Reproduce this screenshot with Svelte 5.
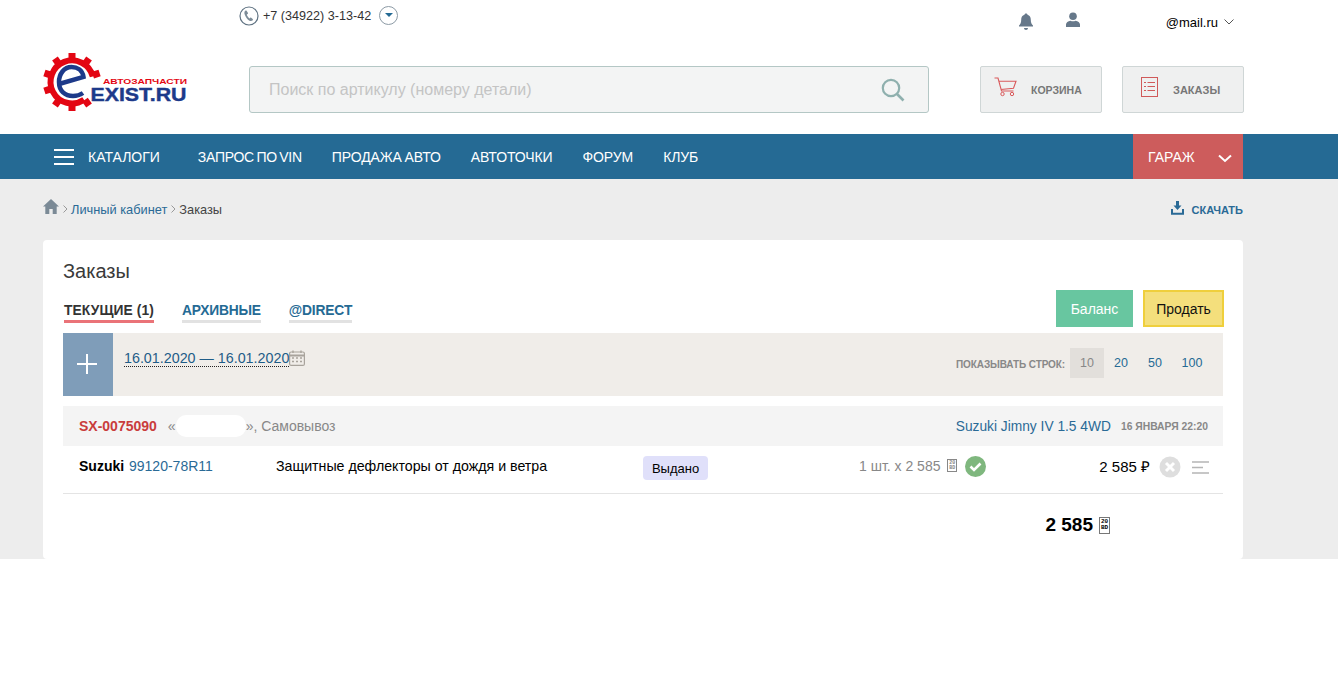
<script>
	const menu = ['ЗАПРОС ПО VIN', 'ПРОДАЖА АВТО', 'АВТОТОЧКИ', 'ФОРУМ', 'КЛУБ'];
	const tabs = [
		{ label: 'ТЕКУЩИЕ (1)', active: true },
		{ label: 'АРХИВНЫЕ' },
		{ label: '@DIRECT' }
	];
	const rows = [10, 20, 50, 100];
	// gear teeth of the logo, the right side is left open for the text
	const teeth = [0, 36, 72, 144, 180, 216, 252, 288, 324];
</script>

{#snippet tofu(kind)}
	<span class="tofu {kind}"><span>20</span><span>BD</span></span>
{/snippet}

<header class="top">
	<div class="top-line">
		<div class="phone">
			<svg width="20" height="20" viewBox="0 0 20 20">
				<circle cx="10" cy="10" r="9" fill="none" stroke="#5f7282" stroke-width="1.2" />
				<path d="M6.500 4.500c-1.200.8-1.400 2.400-.7 4.200.9 2.400 2.700 5 4.700 6 1.300.6 2.600.3 3.300-.5.300-.4.200-.8-.1-1.100l-1.500-1.300c-.3-.3-.8-.2-1.100.1l-.6.6c-1-.6-2.300-2.600-2.700-4l.8-.4c.4-.2.500-.6.400-1L7.600 4.800c-.2-.4-.7-.5-1.100-.3z" fill="#7d8c98" />
			</svg>
			<span>+7 (34922) 3-13-42</span>
			<span class="phone-more"><i></i></span>
		</div>
		<div class="account">
			<svg class="bell" width="16" height="18" viewBox="0 0 16 18">
				<path d="M8 .5c1 0 1.500.7 1.500 1.300 2.300.7 3.300 2.600 3.300 5 0 3 .8 4.300 2.200 5.700v.9H1v-.9C2.400 11.100 3.200 9.800 3.200 6.800c0-2.400 1-4.300 3.300-5C6.500 1.200 7 .5 8 .5z" fill="#66788a" />
				<path d="M6 15h4c0 1.200-.9 2-2 2s-2-.8-2-2z" fill="#66788a" />
			</svg>
			<svg class="user" width="16" height="16" viewBox="0 0 16 16">
				<circle cx="8" cy="4.300" r="3.800" fill="#66788a" />
				<path d="M1 15v-2.500c0-2 2-3.300 4.500-3.800 1.500.8 3.500.8 5 0 2.500.5 4.500 1.800 4.500 3.800V15z" fill="#66788a" />
			</svg>
			<span class="mail">@mail.ru</span>
			<svg width="10" height="6" viewBox="0 0 10 6"><path d="M.5.500 5 5 9.500.5" fill="none" stroke="#555" /></svg>
		</div>
	</div>

	<div class="main-line">
		<svg class="logo" width="146" height="58" viewBox="0 0 146 58">
			<path d="M49.800 23.400A21.500 21.500 0 1 0 41 46.800" fill="none" stroke="#e30613" stroke-width="6" />
			{#each teeth as a}
				<rect x="25.500" y="0" width="7" height="7" fill="#e30613" transform="rotate({a} 29 29)" />
			{/each}
			<path d="M16 31 40.500 24C39.500 17 34 14 28.500 14 21 14 16 21 16 29 16 38 22 43 30 43 34 43 37 42 40 40" fill="none" stroke="#1d3a8a" stroke-width="4.500" />
			<text class="logo-small" x="60" y="31" textLength="84" lengthAdjust="spacingAndGlyphs">АВТОЗАПЧАСТИ</text>
			<text class="logo-big" x="47.500" y="48" textLength="96" lengthAdjust="spacingAndGlyphs">EXIST.RU</text>
		</svg>
		<div class="search">
			<span>Поиск по артикулу (номеру детали)</span>
			<svg width="24" height="24" viewBox="0 0 24 24">
				<circle cx="10" cy="10" r="8.200" fill="none" stroke="#8fb0ae" stroke-width="2.200" />
				<path d="m16 16 6.500 6.500" stroke="#8fb0ae" stroke-width="2.600" />
			</svg>
		</div>
		<div class="action cart-action">
			<svg width="23" height="20" viewBox="0 0 23 20">
				<path d="M.5 1H4l3.500 13h12M5 4.300h17l-2.500 7L6.800 12.500" fill="none" stroke="#d9595b" stroke-width="1.100" />
				<circle cx="8.500" cy="17" r="1.700" fill="none" stroke="#d9595b" />
				<circle cx="18" cy="17" r="1.700" fill="none" stroke="#d9595b" />
			</svg>
			<span>КОРЗИНА</span>
		</div>
		<div class="action orders-action">
			<svg width="17" height="20" viewBox="0 0 17 20">
				<rect x=".5" y=".5" width="16" height="19" fill="none" stroke="#d05a5a" />
				<path d="M3 5.500h2M3 9.500h2M3 13.500h2M6.500 5.500H14M6.500 9.500H14M6.500 13.500H14" stroke="#d05a5a" />
			</svg>
			<span>ЗАКАЗЫ</span>
		</div>
	</div>
</header>

<nav>
	<div class="nav-inner">
		<div class="catalogs">
			<span class="burger"><i></i><i></i><i></i></span>
			<span>КАТАЛОГИ</span>
		</div>
		<div class="menu">
			{#each menu as item}
				<span>{item}</span>
			{/each}
		</div>
		<div class="garage">
			<span>ГАРАЖ</span>
			<svg width="14" height="9" viewBox="0 0 14 9"><path d="M1 1.500 7 7l6-5.500" fill="none" stroke="#fff" stroke-width="2" /></svg>
		</div>
	</div>
</nav>

<main>
	<div class="crumbs">
		<svg width="16" height="15" viewBox="0 0 16 15">
			<path d="M8 0 16 7.500h-2.300V15H9.700V10H6.300v5H2.300V7.500H0z" fill="#7b8a96" />
		</svg>
		<svg class="sep" width="5" height="8" viewBox="0 0 5 8"><path d="m.5.500 3.500 3.500-3.500 3.500" fill="none" stroke="#999" /></svg>
		<span class="link">Личный кабинет</span>
		<svg class="sep" width="5" height="8" viewBox="0 0 5 8"><path d="m.5.500 3.500 3.500-3.500 3.500" fill="none" stroke="#999" /></svg>
		<span>Заказы</span>
		<div class="download">
			<svg width="13" height="14" viewBox="0 0 13 14">
				<path d="M5 0h3v4.500h2.500L6.500 9 2.500 4.500H5z" fill="#2a6a96" />
				<path d="M1 8v4.800h11V8" fill="none" stroke="#2a6a96" stroke-width="2" />
			</svg>
			<span>СКАЧАТЬ</span>
		</div>
	</div>

	<section class="card">
		<h1>Заказы</h1>
		<div class="tabs-line">
			<div class="tabs">
				{#each tabs as tab}
					<span class="tab" class:active={tab.active}>{tab.label}</span>
				{/each}
			</div>
			<div class="buttons">
				<span class="balance">Баланс</span>
				<span class="sell">Продать</span>
			</div>
		</div>

		<div class="filter">
			<span class="plus"><i></i><i></i></span>
			<span class="dates">16.01.2020 — 16.01.2020</span>
			<svg class="calendar" width="16" height="16" viewBox="0 0 16 16">
				<rect x=".6" y="2" width="14.800" height="13.400" rx="1.500" fill="none" stroke="#a8a39c" stroke-width="1.200" />
				<path d="M.6 5.500h14.800" stroke="#a8a39c" stroke-width="2" />
				<path d="M4 .5V3M12 .5V3" stroke="#a8a39c" stroke-width="1.400" />
				<path d="M3 8h2M7 8h2M11 8h2M3 11.500h2M7 11.500h2M11 11.500h2" stroke="#a8a39c" stroke-width="1.400" />
			</svg>
			<div class="rows">
				<span class="rows-label">ПОКАЗЫВАТЬ СТРОК:</span>
				{#each rows as n, i}
					<span class="rows-item" class:current={i === 0}>{n}</span>
				{/each}
			</div>
		</div>

		<div class="order-head">
			<span class="order-num">SX-0075090</span>
			<span class="order-place">«<span class="blot"></span>», Самовывоз</span>
			<span class="car">Suzuki Jimny IV 1.5 4WD</span>
			<span class="order-date">16 ЯНВАРЯ 22:20</span>
		</div>

		<div class="order-row">
			<span class="brand">Suzuki</span>
			<span class="code">99120-78R11</span>
			<span class="name">Защитные дефлекторы от дождя и ветра</span>
			<span class="status">Выдано</span>
			<span class="qty">1 шт. х 2 585 {@render tofu('small')}</span>
			<svg class="ok" width="21" height="21" viewBox="0 0 21 21">
				<circle cx="10.500" cy="10.500" r="10.500" fill="#7fb77e" />
				<path d="m5.500 10.500 3.500 3.500 6.500-6.500" fill="none" stroke="#fff" stroke-width="2.600" />
			</svg>
			<span class="price">2 585 ₽</span>
			<svg class="cancel" width="22" height="22" viewBox="0 0 22 22">
				<circle cx="11" cy="11" r="10.500" fill="#dedede" />
				<path d="m7 7 8 8m0-8-8 8" stroke="#fff" stroke-width="3" />
			</svg>
			<svg class="more" width="17" height="13" viewBox="0 0 17 13">
				<path d="M0 1h17M0 6.500h11M0 12h17" stroke="#b5b5b5" stroke-width="1.500" />
			</svg>
		</div>

		<div class="total">2 585 {@render tofu('big')}</div>
	</section>
</main>

<style>
	:global(body) {
		background: #fff;
		font-family: "Liberation Sans", Arial, sans-serif;
		color: #333;
	}

	.top {
		height: 134px;
		box-sizing: border-box;
		padding-left: 43px;
		width: 1244px;
	}
	.top-line {
		height: 66px;
		display: flex;
		align-items: flex-start;
		padding-left: 196px;
	}
	.phone {
		display: flex;
		align-items: center;
		gap: 4px;
		margin-top: 6px;
		font-size: 12.6px;
		color: #333;
	}
	.phone-more {
		width: 19px;
		height: 19px;
		box-sizing: border-box;
		border: 1px solid #8c9aa5;
		border-radius: 50%;
		margin-left: 4px;
		margin-top: -2px;
		display: flex;
		justify-content: center;
		align-items: center;
	}
	.phone-more i {
		border: 4px solid transparent;
		border-top: 4px solid #256a94;
		border-bottom: 0;
	}
	.account {
		margin-left: auto;
		margin-top: 13px;
		display: flex;
		align-items: center;
		font-size: 13px;
		color: #000;
		padding-right: 10px;
	}
	.bell {
		margin-right: 31px;
	}
	.user {
		margin-right: 85px;
		margin-top: -4px;
	}
	.mail {
		margin-right: 6px;
	}

	.main-line {
		display: flex;
		align-items: flex-start;
	}
	.logo {
		margin-top: -13px;
		margin-right: 60px;
		flex: none;
	}
	.logo-small {
		font: bold 8px "Liberation Sans", sans-serif;
		fill: #e30613;
	}
	.logo-big {
		font: bold 18px "Liberation Sans", sans-serif;
		fill: #1d3a8a;
		stroke: #1d3a8a;
		stroke-width: .4px;
	}
	.search {
		width: 680px;
		height: 47px;
		box-sizing: border-box;
		border: 1px solid #b4c7c5;
		border-radius: 3px;
		background: #f3f4f4;
		display: flex;
		align-items: center;
		justify-content: space-between;
		padding: 0 23px 0 19px;
		font-size: 16px;
		color: #c4c4c4;
		margin-right: 51px;
		flex: none;
	}
	.action {
		width: 122px;
		height: 47px;
		box-sizing: border-box;
		border: 1px solid #cfd6d6;
		border-radius: 2px;
		background: #eff0f0;
		display: flex;
		align-items: center;
		font-size: 11px;
		font-weight: bold;
		color: #777;
		flex: none;
	}
	.action svg {
		margin-top: -6px;
	}
	.cart-action {
		margin-right: 20px;
		padding-left: 13px;
		gap: 14px;
		font-size: 10.5px;
	}
	.orders-action {
		padding-left: 18px;
		gap: 15px;
	}

	nav {
		height: 45px;
		background: #256a94;
		color: #fff;
		font-size: 14px;
	}
	.nav-inner {
		width: 1200px;
		height: 100%;
		margin-left: 43px;
		display: flex;
		align-items: center;
	}
	.catalogs {
		display: flex;
		align-items: center;
		gap: 14px;
		padding-left: 11px;
		margin-right: 38px;
	}
	.burger {
		display: flex;
		flex-direction: column;
		gap: 5px;
		width: 20px;
	}
	.burger i {
		height: 2px;
		background: #fff;
	}
	.menu {
		display: flex;
		gap: 30px;
		word-spacing: -1px;
		letter-spacing: -.1px;
	}
	.menu span:first-child {
		letter-spacing: -.3px;
	}
	.garage {
		margin-left: auto;
		width: 110px;
		height: 100%;
		box-sizing: border-box;
		background: #cd5c5c;
		display: flex;
		align-items: center;
		justify-content: space-between;
		padding: 0 11px 0 15px;
	}
	.garage svg {
		margin-top: 3px;
	}

	main {
		background: #ededed;
		height: 380px;
		box-sizing: border-box;
		padding: 20px 95px 0 43px;
	}
	.crumbs {
		height: 41px;
		display: flex;
		align-items: flex-start;
		gap: 3.500px;
		font-size: 12.800px;
		color: #444;
	}
	.crumbs > span {
		margin-top: 3px;
	}
	.crumbs .sep {
		margin-top: 6px;
	}
	.link {
		color: #2a6a96;
	}
	.download {
		margin-left: auto;
		display: flex;
		align-items: center;
		gap: 7px;
		font-size: 11px;
		font-weight: bold;
		color: #2a6a96;
	}
	.download span {
		margin-top: 5px;
	}

	.card {
		background: #fff;
		height: 319px;
		box-sizing: border-box;
		border-radius: 4px;
		padding: 20px 20px 0;
	}
	h1 {
		margin: 0;
		font-size: 20px;
		font-weight: normal;
		line-height: 23px;
		color: #3a3a3a;
	}
	.tabs-line {
		display: flex;
		justify-content: space-between;
		align-items: flex-start;
		height: 43px;
		margin-top: 7px;
	}
	.tabs {
		display: flex;
		gap: 28px;
		margin-top: 12px;
		padding-left: 1px;
	}
	.tab {
		font-size: 13.800px;
		font-weight: bold;
		line-height: 17px;
		color: #256a94;
		border-bottom: 3px solid #e2e2e2;
		padding-bottom: 1px;
		letter-spacing: -.2px;
	}
	.tab.active {
		color: #333;
		border-bottom-color: #ea7378;
		letter-spacing: .1px;
	}
	.buttons {
		display: flex;
		gap: 10px;
		margin-right: -1px;
	}
	.buttons span {
		height: 37px;
		box-sizing: border-box;
		display: flex;
		align-items: center;
		justify-content: center;
		font-size: 14px;
	}
	.balance {
		width: 77px;
		background: #68c6a0;
		color: #fff;
	}
	.sell {
		width: 81px;
		background: #f4df7c;
		border: 2px solid #efcf3c;
		color: #111;
	}

	.filter {
		height: 63px;
		background: #f0ede9;
		display: flex;
		align-items: flex-start;
	}
	.plus {
		width: 50px;
		height: 63px;
		background: #7f9db9;
		position: relative;
		flex: none;
	}
	.plus i {
		position: absolute;
		background: #fff;
	}
	.plus i:first-child {
		left: 14px;
		top: 30px;
		width: 20px;
		height: 2px;
	}
	.plus i:last-child {
		left: 23px;
		top: 21px;
		width: 2px;
		height: 20px;
	}
	.dates {
		margin: 17px 0 0 11px;
		font-size: 14.300px;
		line-height: 16px;
		color: #1f5c87;
		border-bottom: 1px dotted #222;
	}
	.calendar {
		margin-top: 17px;
	}
	.rows {
		margin-left: auto;
		margin-top: 15px;
		padding-right: 11px;
		display: flex;
		align-items: center;
		font-size: 12.500px;
		color: #256a94;
	}
	.rows-label {
		font-size: 10px;
		font-weight: bold;
		letter-spacing: -.1px;
		color: #888;
		margin-right: 5px;
		margin-top: 2px;
	}
	.rows-item {
		height: 30px;
		min-width: 34px;
		display: flex;
		align-items: center;
		justify-content: center;
	}
	.rows-item:last-child {
		min-width: 40px;
	}
	.rows-item.current {
		background: #e2dfdb;
		color: #888;
	}

	.order-head {
		margin-top: 10px;
		height: 40px;
		box-sizing: border-box;
		background: #f4f4f4;
		padding: 0 15px 0 16px;
		display: flex;
		align-items: center;
	}
	.order-num {
		font-size: 14px;
		font-weight: bold;
		color: #c93c3c;
		margin-right: 11px;
	}
	.order-place {
		font-size: 14px;
		color: #888;
		display: flex;
		align-items: center;
	}
	.blot {
		width: 70px;
		height: 22px;
		background: #fff;
		border-radius: 10px;
	}
	.car {
		margin-left: auto;
		font-size: 13.750px;
		color: #2a6a96;
	}
	.order-date {
		font-size: 10.350px;
		font-weight: bold;
		color: #888;
		margin-left: 10px;
	}

	.order-row {
		height: 48px;
		box-sizing: border-box;
		border-bottom: 1px solid #e4e4e4;
		display: flex;
		align-items: center;
		padding-left: 16px;
		padding-bottom: 8px;
		font-size: 14px;
		color: #000;
	}
	.brand {
		font-weight: bold;
		width: 50px;
		flex: none;
	}
	.code {
		width: 147px;
		flex: none;
		color: #2a6a96;
	}
	.name {
		width: 367px;
		flex: none;
		font-size: 14.200px;
		white-space: nowrap;
	}
	.status {
		width: 65px;
		height: 24px;
		flex: none;
		margin-top: 5px;
		border-radius: 4px;
		background: #e0e0fa;
		font-size: 13px;
		display: flex;
		align-items: center;
		justify-content: center;
	}
	.qty {
		margin-left: 151px;
		color: #888;
		display: flex;
		align-items: center;
		gap: 3px;
		white-space: pre;
	}
	.ok {
		margin-left: 8px;
		margin-top: 2px;
	}
	.price {
		margin-left: auto;
		white-space: nowrap;
		font-size: 15px;
	}
	.cancel {
		margin-left: 9px;
		margin-top: 3px;
	}
	.more {
		margin-left: 11px;
		margin-right: 14px;
		margin-top: 3px;
	}

	.total {
		display: flex;
		align-items: center;
		gap: 6px;
		justify-content: flex-end;
		padding-right: 113px;
		margin-top: 20px;
		font-size: 19px;
		font-weight: bold;
		color: #000;
	}

	.tofu {
		display: inline-flex;
		flex-direction: column;
		align-items: center;
		justify-content: center;
		box-sizing: border-box;
		border: 1px solid;
		font-family: "Liberation Mono", monospace;
		font-weight: bold;
		line-height: 5px;
	}
	.tofu.small {
		width: 10px;
		height: 13px;
		font-size: 5px;
		color: #888;
	}
	.tofu.big {
		width: 11px;
		height: 17px;
		font-size: 6px;
		line-height: 6px;
		color: #000;
		border-color: #777;
	}
</style>
